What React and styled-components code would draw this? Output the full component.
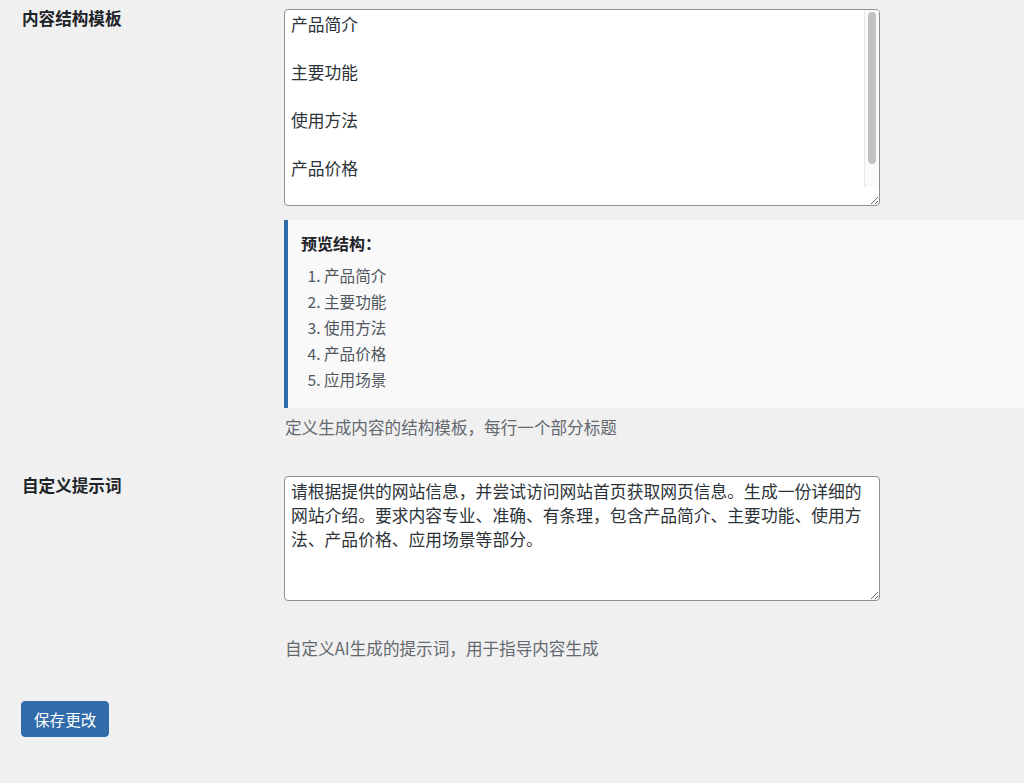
import React from 'react';
import styled, { createGlobalStyle } from 'styled-components';

const GlobalStyle = createGlobalStyle`
  html, body {
    margin: 0;
    padding: 0;
    background: #f0f0f1;
  }
  body {
    font-family: "Noto Sans CJK SC", "Noto Sans", sans-serif;
    color: #1d2327;
  }
`;

const Page = styled.div`
  min-height: 100vh;
  padding: 0 0 40px 22px;
  box-sizing: border-box;
  overflow: hidden;
`;

const FormTable = styled.div`
  display: grid;
  grid-template-columns: 262px 1fr;
  row-gap: 28px;
`;

const Label = styled.div`
  padding-top: 6px;
  font-size: 16.6px;
  line-height: 24px;
  font-weight: 700;
  color: #1d2327;
`;

const Field = styled.div`
  padding-top: 9px;
  min-width: 0;
`;

const AreaWrap = styled.div`
  position: relative;
  width: 596px;
`;

const TextArea = styled.textarea`
  display: block;
  box-sizing: border-box;
  width: 596px;
  height: ${props => props.$height}px;
  margin: 0;
  padding: 2px ${props => (props.$scroll ? 22 : 6)}px 2px 6px;
  border: 1px solid #8c8f94;
  border-radius: 4px;
  background: #fff;
  color: #2c3338;
  font-family: "Noto Sans CJK SC", sans-serif;
  font-size: 16.8px;
  line-height: 24px;
  resize: both;
  outline: none;
  overflow: hidden;
`;

/* the browser hides real scrollbars in the screenshot, so draw one over the box */
const ScrollTrack = styled.div`
  position: absolute;
  top: 1px;
  right: 1px;
  bottom: 19px;
  width: 14px;
  background: #fafafa;
  border-left: 1px solid #e8e8e8;
  border-top-right-radius: 3px;
  pointer-events: none;
`;

const ScrollThumb = styled.div`
  margin: 2px 3px 0 3px;
  width: 8px;
  height: 152px;
  border-radius: 4px;
  background: #c1c1c1;
`;

const Preview = styled.div`
  margin-top: 14px;
  padding: 11px 16px 16px 13px;
  background: #f9f9f9;
  border-left: 4px solid #2f6ca9;
`;

const PreviewTitle = styled.div`
  font-size: 16px;
  line-height: 24px;
  font-weight: 700;
  color: #1d2327;
  margin-bottom: 7px;
`;

const PreviewList = styled.ol`
  margin: 0;
  padding-left: 23px;
  color: #50575e;
  font-size: 15.6px;
  line-height: 26px;
`;

const Description = styled.p`
  margin: ${props => props.$gap}px 0 0 1px;
  font-size: 16.6px;
  line-height: 24px;
  color: #646970;
`;

const Submit = styled.div`
  margin-top: 41px;
  margin-left: -1px;
`;

const PrimaryButton = styled.button`
  height: 36px;
  padding: 0 12px;
  border: 1px solid #2f6ca9;
  border-radius: 4px;
  background: #2f6ca9;
  color: #fff;
  font-family: "Noto Sans CJK SC", sans-serif;
  font-size: 15.6px;
  line-height: 34px;
  cursor: pointer;
`;

const sections = ['产品简介', '主要功能', '使用方法', '产品价格', '应用场景'];

const prompt = '请根据提供的网站信息，并尝试访问网站首页获取网页信息。生成一份详细的网站介绍。要求内容专业、准确、有条理，包含产品简介、主要功能、使用方法、产品价格、应用场景等部分。';

const App = () => {
  return (
    <>
      <GlobalStyle />
      <Page>
        <FormTable>
          <Label>内容结构模板</Label>
          <Field>
            <AreaWrap>
              <TextArea $height={197} $scroll defaultValue={sections.join('\n\n')} />
              <ScrollTrack>
                <ScrollThumb />
              </ScrollTrack>
            </AreaWrap>
            <Preview>
              <PreviewTitle>预览结构：</PreviewTitle>
              <PreviewList>
                {sections.map(s => <li key={s}>{s}</li>)}
              </PreviewList>
            </Preview>
            <Description $gap={7}>定义生成内容的结构模板，每行一个部分标题</Description>
          </Field>

          <Label>自定义提示词</Label>
          <Field>
            <AreaWrap>
              <TextArea $height={125} defaultValue={prompt} />
            </AreaWrap>
            <Description $gap={35}>自定义AI生成的提示词，用于指导内容生成</Description>
          </Field>
        </FormTable>
        <Submit>
          <PrimaryButton type="button">保存更改</PrimaryButton>
        </Submit>
      </Page>
    </>
  );
};

export default App;
